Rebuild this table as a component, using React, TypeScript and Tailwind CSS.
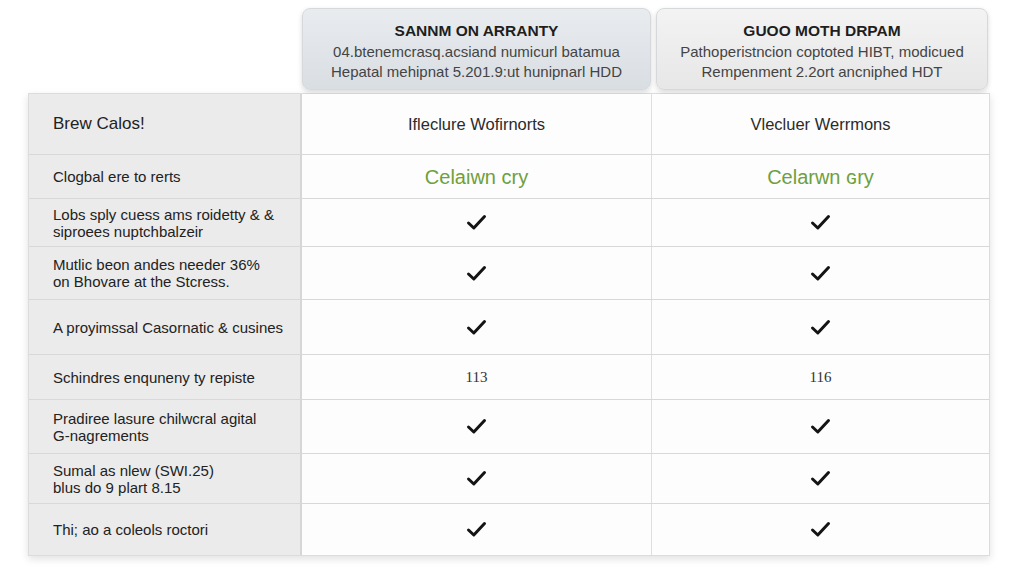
const plans = [
  {
    title: "SANNM ON ARRANTY",
    lines: ["04.btenemcrasq.acsiand numicurl batamua", "Hepatal mehipnat 5.201.9:ut hunipnarl HDD"],
    tone: "bg-gradient-to-b from-[#e9ecef] to-[#d9dee3]",
  },
  {
    title: "GUOO MOTH DRPAM",
    lines: ["Pathoperistncion coptoted HIBT, modicued", "Rempenment 2.2ort ancniphed HDT"],
    tone: "bg-gradient-to-b from-[#f3f3f3] to-[#e7e7e7]",
  },
];

type Cell = "check" | string;

interface Row {
  label: string[];
  h: string;
  cells: [Cell, Cell];
  kind?: "head" | "green" | "num";
}

const rows: Row[] = [
  { label: ["Brew Calos!"], h: "h-[60px]", cells: ["Ifleclure Wofirnorts", "Vlecluer Werrmons"], kind: "head" },
  { label: ["Clogbal ere to rerts"], h: "h-[44px]", cells: ["Celaiwn cry", "Celarwn ɢry"], kind: "green" },
  { label: ["Lobs sply cuess ams roidetty & &", "siproees nuptchbalzeir"], h: "h-[48px]", cells: ["check", "check"] },
  { label: ["Mutlic beon andes needer 36%", "on Bhovare at the Stcress."], h: "h-[53px]", cells: ["check", "check"] },
  { label: ["A proyimssal Casornatic & cusines"], h: "h-[55px]", cells: ["check", "check"] },
  { label: ["Schindres enquneny ty repiste"], h: "h-[45px]", cells: ["113", "116"], kind: "num" },
  { label: ["Pradiree lasure chilwcral agital", "G-nagrements"], h: "h-[54px]", cells: ["check", "check"] },
  { label: ["Sumal as nlew (SWI.25)", "blus do 9 plart 8.15"], h: "h-[50px]", cells: ["check", "check"] },
  { label: ["Thi; ao a coleols roctori"], h: "h-[52px]", cells: ["check", "check"] },
];

function Check() {
  return (
    <svg width="21" height="17" viewBox="0 0 21 17" fill="none">
      <path d="M2.5 9 L7.8 14 L18.5 2.5" stroke="#141414" strokeWidth="3" strokeLinecap="round" strokeLinejoin="round" />
    </svg>
  );
}

function Value({ value, kind }: { value: Cell; kind?: Row["kind"] }) {
  if (value === "check") return <Check />;
  if (kind === "head") return <span className="text-[16.5px] text-[#2b2b2b]">{value}</span>;
  if (kind === "green") return <span className="text-[20px] text-[#6fa03c]">{value}</span>;
  return <span className="font-['Liberation_Serif',serif] text-[15px] text-[#333]">{value}</span>;
}

export default function App() {
  return (
    <div className="h-[576px] w-[1024px] bg-white pt-2 font-['Liberation_Sans',Arial,sans-serif]">
      <div className="ml-[28px] grid grid-cols-[274px_351px_336px]">
        <div />
        {plans.map((plan, i) => (
          <div
            key={plan.title}
            className={`${i === 0 ? "mr-[2px]" : "ml-[3px] mr-[1px]"} h-[82px] rounded-lg border border-[#d6d9dc] ${plan.tone} pt-[12px] text-center shadow-[0_2px_5px_rgba(0,0,0,0.15)]`}
          >
            <p className="text-[15.5px] font-bold leading-5 text-[#1e1e1e]">{plan.title}</p>
            <div className="mt-[1px] text-[15px] leading-5 text-[#444]">
              {plan.lines.map(line => (
                <p key={line}>{line}</p>
              ))}
            </div>
          </div>
        ))}
      </div>

      <div className="ml-[28px] mt-[3px] w-[962px] border border-[#dcdcdc] shadow-[0_3px_8px_rgba(0,0,0,0.12)]">
        {rows.map((row, i) => (
          <div
            key={i}
            className={`grid grid-cols-[273px_350px_337px] ${row.h} ${i > 0 ? "border-t border-[#d8d8d8]" : ""}`}
          >
            <div className="flex flex-col justify-center border-r-2 border-[#d6d6d6] bg-[#ebebeb] pl-[24px] text-[#222]">
              {row.label.map(line => (
                <p key={line} className={row.kind === "head" ? "text-[17px] leading-5" : "text-[15px] leading-[17px]"}>
                  {line}
                </p>
              ))}
            </div>
            <div className="flex items-center justify-center border-r border-[#dedede] bg-[#fdfdfd]">
              <Value value={row.cells[0]} kind={row.kind} />
            </div>
            <div className="flex items-center justify-center bg-[#fdfdfd]">
              <Value value={row.cells[1]} kind={row.kind} />
            </div>
          </div>
        ))}
      </div>
    </div>
  );
}
